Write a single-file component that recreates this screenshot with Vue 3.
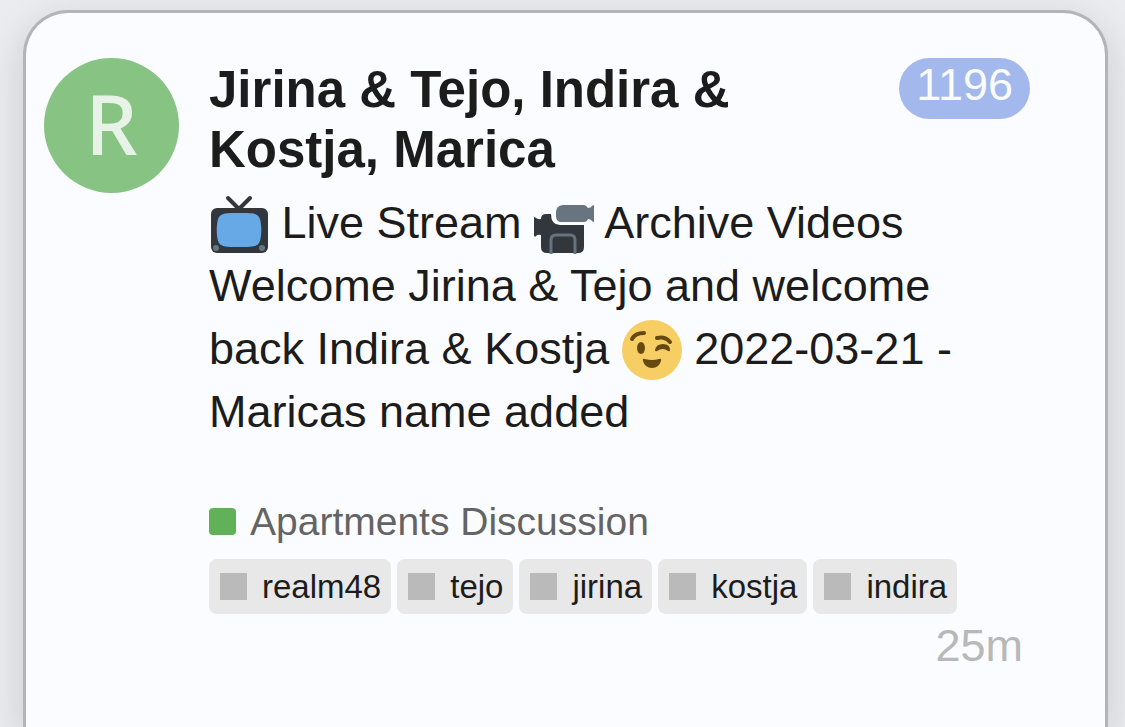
<script setup>
const tags = ['realm48', 'tejo', 'jirina', 'kostja', 'indira']
</script>

<template>
  <main class="page">
    <article class="card">
      <a class="avatar" href="#" aria-label="R">R</a>
      <div class="content">
        <header class="head">
          <h1 class="title">Jirina &amp; Tejo, Indira &amp; Kostja, Marica</h1>
          <a class="badge" href="#">1196</a>
        </header>
        <p class="excerpt">
          <svg class="emoji" viewBox="0 0 60 60" role="img" aria-label="television">
            <path d="M19 4l11 11L41 4" fill="none" stroke="#31373d" stroke-width="4" stroke-linecap="round" stroke-linejoin="round" />
            <rect x="2" y="14" width="57" height="45" rx="6" fill="#31373d" />
            <path d="M30 19c13 0 17 0 20 4 3 5 3 21 0 26-3 4-7 4-20 4s-17 0-20-4c-3-5-3-21 0-26 3-4 7-4 20-4z" fill="#67a9e6" />
            <circle cx="7" cy="54" r="3" fill="#66757f" />
            <circle cx="53" cy="54" r="3" fill="#66757f" />
          </svg>
          Live Stream
          <svg class="emoji" viewBox="0 0 60 60" role="img" aria-label="video camera">
            <path d="M0 23q1 0 3 1.500 2 1 4 .5 0-5 5-5h5q0 11 9 11h24v22q0 6-6 6H13q-6 0-6-6V41q-3-1-5 1-1 1-2 0z" fill="#31373d" />
            <path d="M17 60V46q0-5 5-5h14q5 0 5 5v14" fill="none" stroke="#66727d" stroke-width="3" />
            <path d="M29 11h21q2 0 4 3 3 0 4-2 2-2 2 0v15q0 2-2 0-1-2-4-2-1 3-4 3H26q-4-1-4-6v-4q0-6 7-7z" fill="#68747f" />
          </svg>
          Archive Videos Welcome Jirina &amp; Tejo and welcome back Indira &amp; Kostja
          <svg class="emoji" viewBox="0 0 60 60" role="img" aria-label="wink">
            <circle cx="30" cy="30" r="30" fill="#f7ce63" />
            <ellipse cx="19" cy="28" rx="4" ry="6" fill="#664910" />
            <g fill="none" stroke="#664910" stroke-width="4" stroke-linecap="round">
              <path d="M10 19q3-6 12-6" />
              <path d="M35 18q8-2 13 4" />
            </g>
            <path d="M33 30q1-6 8-6t7 6q0 2-2 1-5-4-11 0-2 1-2-1z" fill="#664910" />
            <path d="M21 41q-1-3 2-2 7 2 14 0 3-1 2 2-2 7-9 7t-9-7z" fill="#664910" />
          </svg>
          2022-03-21 - Maricas name added
        </p>
        <a class="category" href="#"><span class="swatch"></span>Apartments Discussion</a>
        <ul class="tags">
          <li v-for="tag in tags" :key="tag">
            <a class="tag" href="#"><span class="mark"></span>{{ tag }}</a>
          </li>
        </ul>
        <a class="age" href="#">25m</a>
      </div>
    </article>
  </main>
</template>

<style>
body {
  background: #ebecf0;
}
</style>

<style scoped>
.page {
  box-sizing: border-box;
  display: flex;
  min-height: 100vh;
  padding: 10px 17px 0 23px;
  overflow: hidden;
  font-family: "Liberation Sans", Arial, sans-serif;
  color: #1c1c1c;
}
.card {
  flex: 1;
  display: flex;
  align-items: flex-start;
  gap: 30px;
  padding: 45px 75px 45px 18px;
  border: 3px solid #b3b4b7;
  border-bottom: 0;
  border-radius: 45px 45px 0 0;
  background: #fbfcff;
  box-shadow: 0 12px 42px rgba(0, 0, 0, 0.15);
}
a {
  color: inherit;
  text-decoration: none;
}
.avatar {
  flex: none;
  width: 135px;
  height: 135px;
  border-radius: 50%;
  background: #87c383;
  color: #e7f3e6;
  font: 500 83px/129px "Noto Sans", sans-serif;
  text-align: center;
}
.content {
  flex: 1;
  min-width: 0;
  display: flex;
  flex-direction: column;
  align-items: flex-start;
}
.head {
  align-self: stretch;
  display: flex;
  align-items: flex-start;
}
.title {
  flex: 1;
  margin: 2px 0 0;
  font-size: 51px;
  line-height: 60px;
}
.badge {
  padding: 0 17px;
  height: 61px;
  border-radius: 31px;
  background: #a3b9ed;
  color: #fbfcff;
  font-size: 45px;
  line-height: 54px;
}
.excerpt {
  margin: 11px 30px 0 0;
  font-size: 45px;
  line-height: 63px;
}
.emoji {
  width: 60px;
  height: 60px;
  vertical-align: -16px;
}
.category {
  display: flex;
  align-items: center;
  gap: 14px;
  margin-top: 56px;
  color: #646464;
  font-size: 39px;
  line-height: 45px;
}
.swatch,
.mark {
  width: 27px;
  height: 27px;
}
.swatch {
  border-radius: 4px;
  background: #60b158;
}
.tags {
  display: flex;
  flex-wrap: wrap;
  gap: 6px;
  margin: 15px 0 0;
  padding: 0;
  list-style: none;
}
.tag {
  display: flex;
  align-items: center;
  gap: 15px;
  padding: 0 10px 0 11px;
  border-radius: 8px;
  background: #e8e8e8;
  font-size: 33px;
  line-height: 55px;
}
.mark {
  background: #bababa;
}
.age {
  align-self: flex-end;
  margin: 5px 7px 0 0;
  color: #b8b8b8;
  font-size: 45px;
  line-height: 54px;
}
</style>
